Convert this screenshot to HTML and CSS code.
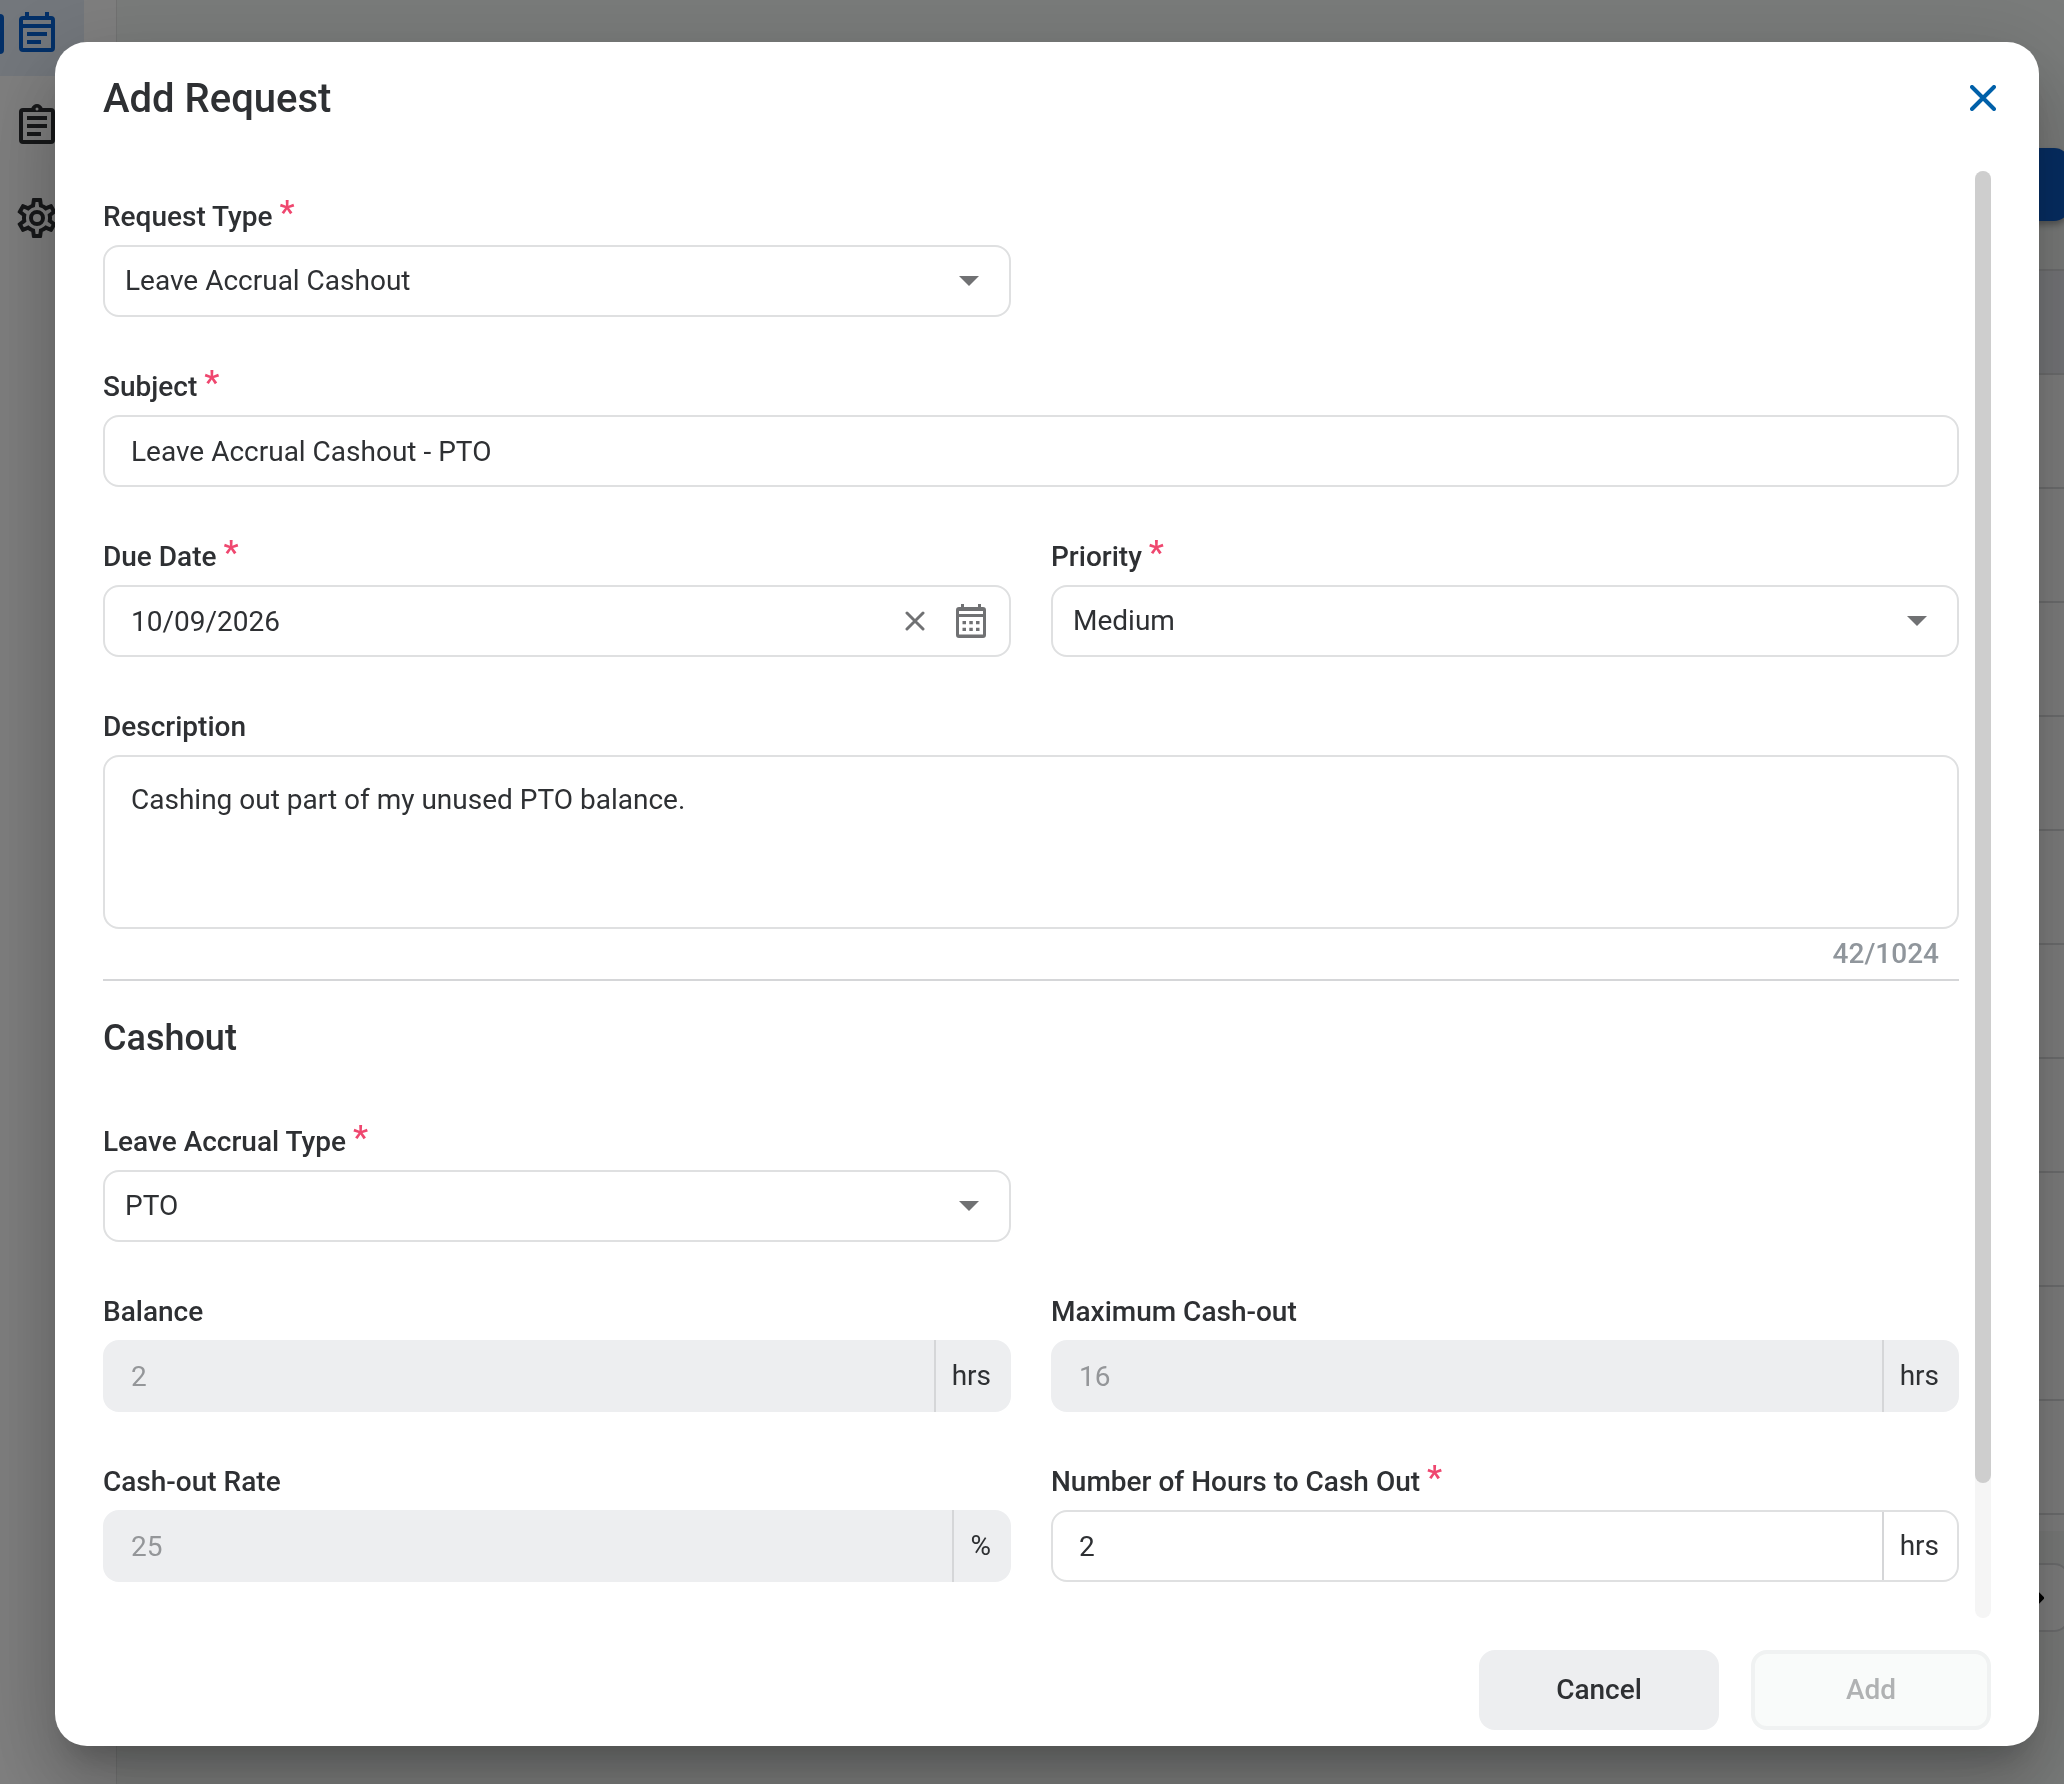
FILE: index.html
```html
<!DOCTYPE html>
<html lang="en">
<head>
  <meta charset="utf-8">
  <meta name="viewport" content="width=device-width, initial-scale=1">
  <title>Add Request</title>
  <link rel="stylesheet" href="styles.css">
</head>
<body>
  <div class="app" aria-hidden="true" inert>
    <nav class="sidebar">
      <a class="sidebar-item is-active" href="#requests" aria-label="Requests">
        <svg viewBox="0 0 24 24"><path d="M19 3h-1V1h-2v2H8V1H6v2H5a2 2 0 0 0-2 2v14a2 2 0 0 0 2 2h14a2 2 0 0 0 2-2V5a2 2 0 0 0-2-2zm0 16H5V9h14v10zm0-12H5V5h14v2zM7 11h10v2H7zm0 4h7v2H7z"/></svg>
      </a>
      <a class="sidebar-item" href="#tasks" aria-label="Tasks">
        <svg viewBox="0 0 24 24"><path d="M7 15h7v2H7zm0-4h10v2H7zm0-4h10v2H7zm12-4h-4.18C14.4 1.84 13.3 1 12 1s-2.4.84-2.82 2H5a2 2 0 0 0-2 2v14a2 2 0 0 0 2 2h14a2 2 0 0 0 2-2V5a2 2 0 0 0-2-2zm-7-.25a.75.75 0 1 1 0 1.500.75.75 0 0 1 0-1.500zM19 19H5V5h14v14z"/></svg>
      </a>
      <a class="sidebar-item" href="#settings" aria-label="Settings">
        <svg viewBox="0 0 24 24"><path d="M19.43 12.98c.04-.32.07-.64.07-.98s-.03-.66-.07-.98l2.11-1.65c.19-.15.24-.42.12-.64l-2-3.46c-.09-.16-.26-.25-.44-.25-.06 0-.12.01-.17.03l-2.49 1c-.52-.4-1.08-.73-1.69-.98l-.38-2.65C14.46 2.18 14.25 2 14 2h-4c-.25 0-.46.18-.49.42l-.38 2.65c-.61.25-1.17.59-1.69.98l-2.49-1c-.06-.02-.12-.03-.18-.03-.17 0-.34.09-.43.25l-2 3.46c-.13.22-.07.49.12.64l2.11 1.65c-.04.32-.07.65-.07.98s.03.66.07.98l-2.11 1.65c-.19.15-.24.42-.12.64l2 3.46c.09.16.26.25.44.25.06 0 .12-.01.17-.03l2.49-1c.52.4 1.08.73 1.69.98l.38 2.65c.03.24.24.42.49.42h4c.25 0 .46-.18.49-.42l.38-2.65c.61-.25 1.17-.59 1.69-.98l2.49 1c.06.02.12.03.18.03.17 0 .34-.09.43-.25l2-3.46c.12-.22.07-.49-.12-.64l-2.11-1.65zm-1.98-1.71c.04.31.05.52.05.73 0 .21-.02.43-.05.73l-.14 1.13.89.7 1.08.84-.7 1.21-1.27-.51-1.04-.42-.9.68c-.43.32-.84.56-1.25.73l-1.06.43-.16 1.13-.2 1.35h-1.4l-.19-1.35-.16-1.13-1.06-.43c-.43-.18-.83-.41-1.23-.71l-.91-.7-1.06.43-1.27.51-.7-1.21 1.08-.84.89-.7-.14-1.13c-.03-.31-.05-.54-.05-.74s.02-.43.05-.73l.14-1.13-.89-.7-1.08-.84.7-1.21 1.27.51 1.04.42.9-.68c.43-.32.84-.56 1.25-.73l1.06-.43.16-1.13.2-1.35h1.39l.19 1.35.16 1.13 1.06.43c.43.18.83.41 1.23.71l.91.7 1.06-.43 1.27-.51.7 1.21-1.07.85-.89.7.14 1.13zM12 8a4 4 0 1 0 0 8 4 4 0 0 0 0-8zm0 6a2 2 0 1 1 0-4 2 2 0 0 1 0 4z"/></svg>
      </a>
    </nav>
    <main class="page">
      <button class="page-action" type="button" aria-label="New request"></button>
      <div class="list">
        <div class="list-head"></div>
        <div class="list-row"></div>
        <div class="list-row"></div>
        <div class="list-row"></div>
        <div class="list-row"></div>
        <div class="list-row"></div>
        <div class="list-row"></div>
        <div class="list-row"></div>
        <div class="list-row"></div>
        <div class="list-row"></div>
        <div class="list-row"></div>
      </div>
      <button class="pager" type="button" aria-label="Next page">
        <svg viewBox="0 0 12 20"><path d="M2 2l8 8-8 8"/></svg>
      </button>
    </main>
  </div>

  <div class="backdrop">
    <form class="dialog" role="dialog" aria-modal="true" aria-labelledby="dialog-title">
      <header class="dialog-head">
        <h1 id="dialog-title">Add Request</h1>
        <button class="icon-button close" type="button" aria-label="Close">
          <svg viewBox="0 0 26 26"><path d="M2 2l22 22M24 2L2 24"/></svg>
        </button>
      </header>

      <div class="dialog-main">
        <div class="dialog-body">
          <div class="fields">
            <div class="field">
              <label for="request-type">Request Type <span class="required">*</span></label>
              <div class="control select">
                <select id="request-type"><option>Leave Accrual Cashout</option></select>
                <svg class="caret" viewBox="0 0 20 10"><path d="M0 0h20L10 10z"/></svg>
              </div>
            </div>
            <div class="field wide">
              <label for="subject">Subject <span class="required">*</span></label>
              <div class="control"><input id="subject" type="text" value="Leave Accrual Cashout - PTO"></div>
            </div>
            <div class="field">
              <label for="due-date">Due Date <span class="required">*</span></label>
              <div class="control date">
                <input id="due-date" type="text" value="10/09/2026">
                <button class="icon-button clear" type="button" aria-label="Clear date">
                  <svg viewBox="0 0 20 20"><path d="M2 2l16 16M18 2L2 18"/></svg>
                </button>
                <button class="icon-button calendar" type="button" aria-label="Open calendar">
                  <svg viewBox="0 0 30 34"><path fill-rule="evenodd" d="M5 0h3v3h14V0h3v3h2a3 3 0 0 1 3 3v25a3 3 0 0 1-3 3H3a3 3 0 0 1-3-3V6a3 3 0 0 1 3-3h2zM3 7v3h24V7zM3 13v17.500h24V13z"/><path d="M6.500 17H10v3.300H6.500zM13.300 17h3.500v3.300h-3.500zM20 17h3.500v3.300H20zM6.500 23.700H10V27H6.500zM13.300 23.700h3.500V27h-3.500zM20 23.700h3.500V27H20z"/></svg>
                </button>
              </div>
            </div>
            <div class="field">
              <label for="priority">Priority <span class="required">*</span></label>
              <div class="control select">
                <select id="priority"><option>Medium</option></select>
                <svg class="caret" viewBox="0 0 20 10"><path d="M0 0h20L10 10z"/></svg>
              </div>
            </div>
            <div class="field wide">
              <label for="description">Description</label>
              <textarea id="description" maxlength="1024">Cashing out part of my unused PTO balance.</textarea>
            </div>
          </div>
          <p class="counter">42/1024</p>

          <h2>Cashout</h2>
          <div class="fields">
            <div class="field">
              <label for="accrual-type">Leave Accrual Type <span class="required">*</span></label>
              <div class="control select">
                <select id="accrual-type"><option>PTO</option></select>
                <svg class="caret" viewBox="0 0 20 10"><path d="M0 0h20L10 10z"/></svg>
              </div>
            </div>
            <div class="field first">
              <label for="balance">Balance</label>
              <div class="control is-disabled"><input id="balance" type="text" value="2" disabled><span class="unit">hrs</span></div>
            </div>
            <div class="field">
              <label for="maximum">Maximum Cash-out</label>
              <div class="control is-disabled"><input id="maximum" type="text" value="16" disabled><span class="unit">hrs</span></div>
            </div>
            <div class="field">
              <label for="rate">Cash-out Rate</label>
              <div class="control is-disabled"><input id="rate" type="text" value="25" disabled><span class="unit">%</span></div>
            </div>
            <div class="field">
              <label for="hours">Number of Hours to Cash Out <span class="required">*</span></label>
              <div class="control"><input id="hours" type="text" value="2"><span class="unit">hrs</span></div>
            </div>
          </div>
        </div>
        <div class="scrollbar" aria-hidden="true"><div class="scrollbar-thumb" style="height: 90.7%"></div></div>
      </div>

      <footer class="dialog-foot">
        <button class="button" type="button">Cancel</button>
        <button class="button add" type="submit" disabled>Add</button>
      </footer>
    </form>
  </div>
</body>
</html>
```
FILE: styles.css
```css
*,
*::before,
*::after {
  box-sizing: border-box;
}

body {
  margin: 0;
  font-family: Roboto, "Liberation Sans", sans-serif;
  font-size: 28px;
  line-height: 38px;
  color: #2e3033;
}

h1,
h2,
p {
  margin: 0;
}

button,
input,
select,
textarea {
  font: inherit;
  color: inherit;
}

svg {
  display: block;
}

/* Page under the dialog */
.app {
  display: flex;
  height: 100vh;
  overflow: hidden;
  background: #f5f8f6;
}

.sidebar {
  display: flex;
  flex: none;
  flex-direction: column;
  gap: 8px;
  width: 117px;
  margin-top: -8px;
  border-right: 1px solid #e4e5e5;
  background: #fff;
}

.sidebar-item {
  display: flex;
  align-items: center;
  width: 84px;
  height: 84px;
  padding-left: 13px;
  color: #2e3033;
}

.sidebar-item svg {
  width: 48px;
  height: 48px;
  fill: currentColor;
}

.sidebar-item.is-active {
  padding-left: 0;
  gap: 9px;
  color: #0660d0;
  background: #e6eef8;
}

.sidebar-item.is-active::before {
  content: "";
  width: 4px;
  height: 40px;
  border-radius: 0 4px 4px 0;
  background: currentColor;
}

.page {
  display: flex;
  flex: 1;
  flex-direction: column;
  align-items: flex-end;
  margin-right: -6px;
  padding-top: 148px;
}

.page-action {
  flex: none;
  width: 240px;
  height: 73px;
  border: 0;
  border-radius: 16px;
  background: #0d5cc8;
  box-shadow: 0 4px 6px rgba(0, 0, 0, 0.3);
}

.list {
  flex: none;
  align-self: stretch;
  margin-top: 48px;
  padding-bottom: 16px;
  border-top: 2px solid #dcdddf;
  background: #fff;
}

.list-head,
.list-row {
  height: 114px;
  border-bottom: 2px solid #dcdddf;
}

.list-head {
  height: 104px;
  background: #eceef3;
}

.pager {
  display: flex;
  flex: none;
  align-items: center;
  justify-content: flex-end;
  width: 96px;
  height: 69px;
  margin-top: 32px;
  padding: 0 24px;
  border: 2px solid #dcdddf;
  border-radius: 16px;
  background: #fff;
}

.pager svg {
  width: 12px;
  height: 20px;
  fill: none;
  stroke: #000;
  stroke-width: 4;
}

/* Dialog */
.backdrop {
  position: fixed;
  inset: 0;
  display: flex;
  padding: 42px 25px 38px 55px;
  background: rgba(0, 0, 0, 0.5);
}

.dialog {
  display: flex;
  flex: 1;
  flex-direction: column;
  min-width: 0;
  border-radius: 32px;
  background: #fff;
  box-shadow:
    0 22px 30px -14px rgba(0, 0, 0, 0.2),
    0 48px 76px 6px rgba(0, 0, 0, 0.14),
    0 18px 92px 16px rgba(0, 0, 0, 0.12);
}

.dialog-head {
  display: flex;
  align-items: flex-start;
  justify-content: space-between;
  padding: 32px 43px 47px 48px;
}

h1 {
  font-size: 40px;
  font-weight: 500;
  line-height: 50px;
}

.icon-button {
  display: flex;
  flex: none;
  padding: 0;
  border: 0;
  background: none;
}

.icon-button svg {
  fill: none;
  stroke: currentColor;
  stroke-linecap: round;
}

.close {
  margin-top: 11px;
  color: #0060a9;
}

.close svg {
  width: 26px;
  height: 26px;
  stroke-width: 4;
}

.dialog-main {
  display: flex;
  flex: 1;
  gap: 16px;
  min-height: 0;
  padding: 0 48px;
}

.dialog-body {
  flex: 1;
  min-width: 0;
  padding: 26px 0 185px;
  overflow-y: auto;
  scrollbar-width: none;
}

.scrollbar {
  flex: none;
  width: 16px;
  border-radius: 8px;
  background: #f5f5f5;
}

.scrollbar-thumb {
  border-radius: 8px;
  background: #cecece;
}

.fields {
  display: grid;
  grid-template-columns: 1fr 1fr;
  gap: 50px 40px;
}

.field {
  display: flex;
  flex-direction: column;
  gap: 10px;
  min-width: 0;
}

.field.wide {
  grid-column: 1 / -1;
}

.field.first {
  grid-column-start: 1;
}

label {
  height: 38px;
  font-weight: 500;
  line-height: 40px;
}

.required {
  font-size: 34px;
  line-height: 0;
  color: #ef476f;
  vertical-align: 2px;
}

.control,
textarea {
  border: 2px solid #dfe0e1;
  border-radius: 16px;
  background: #fff;
}

.control {
  display: flex;
  align-items: center;
  height: 72px;
  overflow: hidden;
}

.control input,
.control select {
  flex: 1;
  min-width: 0;
  height: 68px;
  margin: 0;
  padding: 0 26px;
  border: 0;
  outline: 0;
  background: none;
}

.select {
  display: grid;
}

.select > * {
  grid-area: 1 / 1;
}

.control select {
  padding: 0 60px 0 20px;
  appearance: none;
}

.caret {
  justify-self: end;
  width: 20px;
  height: 10px;
  margin-right: 30px;
  fill: #707173;
  pointer-events: none;
}

.date {
  gap: 31px;
  padding-right: 23px;
}

.date .icon-button {
  color: #707173;
}

.clear svg {
  width: 20px;
  height: 20px;
  stroke-width: 3;
}

.calendar svg {
  width: 30px;
  height: 34px;
  fill: currentColor;
  stroke: none;
}

textarea {
  display: block;
  width: 100%;
  height: 174px;
  margin: 0;
  padding: 24px 26px;
  outline: 0;
  resize: none;
}

.unit {
  display: flex;
  align-items: center;
  align-self: stretch;
  padding: 0 18px 0 16px;
  border-left: 2px solid #d5d6d8;
}

.is-disabled {
  padding: 0 2px;
  border: 0;
  background: #edeef0;
}

.is-disabled input {
  color: #949699;
}

.counter {
  margin-top: 6px;
  padding: 0 20px 6px 0;
  border-bottom: 2px solid #d5d6d8;
  font-weight: 500;
  color: #90969c;
  text-align: right;
}

h2 {
  margin: 33px 0 60px;
  font-size: 36px;
  font-weight: 500;
  line-height: 48px;
}

.dialog-foot {
  display: flex;
  justify-content: flex-end;
  gap: 32px;
  padding: 32px 48px 16px;
}

.button {
  width: 240px;
  height: 80px;
  padding: 0;
  border: 0;
  border-radius: 16px;
  font-weight: 500;
  background: #edeef0;
}

.button.add {
  border: 4px solid #f0f2f2;
  color: #b0b2b3;
  background: #f9fbfa;
}
```
